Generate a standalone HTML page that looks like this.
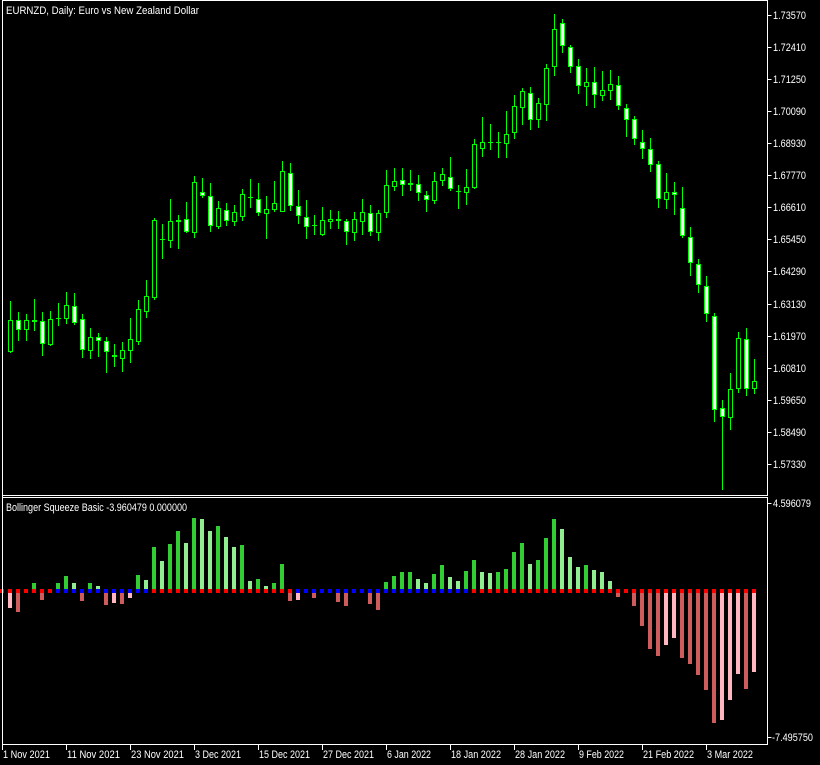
<!DOCTYPE html>
<html><head><meta charset="utf-8"><style>
html,body{margin:0;padding:0;background:#000;}
svg{display:block;}
text{font-family:"Liberation Sans",sans-serif;font-size:11px;fill:#fff;}
</style></head><body>
<svg width="820" height="765" viewBox="0 0 820 765" xmlns="http://www.w3.org/2000/svg">
<rect width="820" height="765" fill="#000"/>
<g fill="none" stroke="#fff" stroke-width="1">
<path d="M2.5 0.5H767.5V495.5H2.5Z"/>
<path d="M2.5 497.5H767.5V744.5H2.5Z"/>
<path d="M767.5 15.5h4M767.5 47.5h4M767.5 79.5h4M767.5 111.5h4M767.5 143.5h4M767.5 175.5h4M767.5 207.5h4M767.5 239.5h4M767.5 271.5h4M767.5 304.5h4M767.5 336.5h4M767.5 368.5h4M767.5 400.5h4M767.5 432.5h4M767.5 464.5h4M767.5 503.5h4M767.5 737.5h4"/>
<path d="M2.5 744V750M66.5 744V750M130.5 744V750M194.5 744V750M258.5 744V750M322.5 744V750M386.5 744V750M450.5 744V750M514.5 744V750M578.5 744V750M642.5 744V750M706.5 744V750"/>
</g>
<path fill="none" stroke="#00ff00" stroke-width="1" d="M10.5 301V353M18.5 312V341M26.5 314V341M34.5 299V331M42.5 312V356M50.5 311V346M58.5 303V326M66.5 292V324M74.5 293V325M82.5 314V358M90.5 328V359M98.5 333V357M106.5 337V373M114.5 344V367M122.5 342V372M130.5 318V363M138.5 300V345M146.5 280V318M154.5 218V300M162.5 224V259M170.5 199V248M178.5 215V249M186.5 202V233M194.5 176V238M202.5 178V198M210.5 183V232M218.5 201V229M226.5 203V226M234.5 205V226M242.5 189V221M250.5 179V208M258.5 183V216M266.5 196V239M274.5 181V212M282.5 161V212M290.5 163V211M298.5 190V224M306.5 200V239M314.5 215V235M322.5 207V236M330.5 210V229M338.5 211V229M346.5 219V245M354.5 212V241M362.5 199V235M370.5 205V236M378.5 210V241M386.5 170V218M394.5 168V191M402.5 168V196M410.5 170V191M418.5 175V201M426.5 191V212M434.5 172V204M442.5 168V186M450.5 157V191M458.5 185V209M466.5 169V205M474.5 139V189M482.5 117V157M490.5 124V150M498.5 132V158M506.5 111V158M514.5 95V139M522.5 88V125M530.5 87V130M538.5 98V128M546.5 64V121M554.5 14V76M562.5 19V53M570.5 45V73M578.5 59V94M586.5 68V106M594.5 67V108M602.5 71V101M610.5 70V100M618.5 76V110M626.5 104V137M634.5 116V145M642.5 130V159M650.5 138V172M658.5 161V208M666.5 173V209M674.5 182V215M682.5 187V238M690.5 227V276M698.5 259V293M706.5 276V322M714.5 313V422M722.5 400V490M730.5 373V430M738.5 332V393M746.5 328V396M754.5 359V394"/>
<path fill="none" stroke="#00ff00" stroke-width="1" d="M56 318.5h5M160 239.5h5M248 197.5h5M312 225.5h5M456 191.5h5M488 142.5h5M496 142.5h5"/>
<path fill="#000" stroke="#00ff00" stroke-width="1" d="M8.5 320.5h4v31h-4zM24.5 320.5h4v9h-4zM48.5 319.5h4v25h-4zM64.5 305.5h4v13h-4zM88.5 337.5h4v13h-4zM120.5 350.5h4v8h-4zM128.5 339.5h4v11h-4zM136.5 309.5h4v32h-4zM144.5 296.5h4v15h-4zM152.5 220.5h4v77h-4zM168.5 221.5h4v19h-4zM176.5 220.5h4v1h-4zM192.5 182.5h4v50h-4zM216.5 208.5h4v18h-4zM232.5 212.5h4v9h-4zM240.5 194.5h4v22h-4zM264.5 209.5h4v4h-4zM272.5 203.5h4v6h-4zM280.5 171.5h4v40h-4zM320.5 220.5h4v14h-4zM328.5 219.5h4v2h-4zM336.5 219.5h4v1h-4zM352.5 219.5h4v13h-4zM360.5 212.5h4v9h-4zM376.5 213.5h4v19h-4zM384.5 185.5h4v27h-4zM392.5 181.5h4v5h-4zM408.5 183.5h4v1h-4zM432.5 181.5h4v19h-4zM440.5 174.5h4v6h-4zM464.5 187.5h4v5h-4zM472.5 144.5h4v43h-4zM480.5 142.5h4v6h-4zM504.5 134.5h4v9h-4zM512.5 106.5h4v26h-4zM520.5 91.5h4v16h-4zM536.5 103.5h4v16h-4zM544.5 68.5h4v36h-4zM552.5 29.5h4v37h-4zM584.5 82.5h4v4h-4zM600.5 90.5h4v5h-4zM608.5 84.5h4v6h-4zM664.5 192.5h4v7h-4zM728.5 389.5h4v28h-4zM736.5 338.5h4v50h-4zM752.5 381.5h4v7h-4z"/>
<path fill="#fff" stroke="#00ff00" stroke-width="1" d="M16.5 320.5h4v9h-4zM32.5 320.5h4v1h-4zM40.5 321.5h4v22h-4zM72.5 306.5h4v16h-4zM80.5 319.5h4v30h-4zM96.5 337.5h4v3h-4zM104.5 341.5h4v10h-4zM112.5 355.5h4v1h-4zM184.5 219.5h4v12h-4zM200.5 192.5h4v3h-4zM208.5 196.5h4v29h-4zM224.5 210.5h4v10h-4zM256.5 199.5h4v13h-4zM288.5 173.5h4v32h-4zM296.5 206.5h4v9h-4zM304.5 217.5h4v9h-4zM344.5 221.5h4v10h-4zM368.5 213.5h4v18h-4zM400.5 180.5h4v4h-4zM416.5 184.5h4v8h-4zM424.5 195.5h4v4h-4zM448.5 177.5h4v11h-4zM528.5 93.5h4v26h-4zM560.5 23.5h4v22h-4zM568.5 47.5h4v19h-4zM576.5 66.5h4v19h-4zM592.5 82.5h4v12h-4zM616.5 85.5h4v20h-4zM624.5 108.5h4v11h-4zM632.5 119.5h4v19h-4zM640.5 142.5h4v6h-4zM648.5 149.5h4v15h-4zM656.5 164.5h4v34h-4zM672.5 192.5h4v2h-4zM680.5 208.5h4v27h-4zM688.5 237.5h4v25h-4zM696.5 264.5h4v20h-4zM704.5 286.5h4v27h-4zM712.5 316.5h4v93h-4zM720.5 408.5h4v8h-4zM744.5 339.5h4v49h-4z"/>
<path fill="none" stroke="#32cd32" stroke-width="4" d="M34 589V583M58 589V583M66 589V576M90 589V583M138 589V575M154 589V547M170 589V544M178 589V531M194 589V518M218 589V526M242 589V545M258 589V579M274 589V583M282 589V564M386 589V582M394 589V576M402 589V572M410 589V572M434 589V574M442 589V565M466 589V571M474 589V560M498 589V572M506 589V569M514 589V552M522 589V543M538 589V560M546 589V538M554 589V519M586 589V565"/>
<path fill="none" stroke="#90ee90" stroke-width="4" d="M74 589V583M98 589V586M146 589V580M162 589V561M186 589V543M202 589V519M210 589V531M226 589V537M234 589V547M250 589V581M266 589V586M418 589V579M426 589V583M450 589V577M458 589V581M482 589V572M490 589V573M530 589V564M562 589V529M570 589V557M578 589V567M594 589V570M602 589V572M610 589V581"/>
<path fill="none" stroke="#cd5c5c" stroke-width="4" d="M18 593V612M42 593V600M82 593V601M106 593V605M122 593V604M290 593V601M314 593V598M338 593V602M346 593V606M370 593V604M378 593V610M618 593V597M634 593V606M642 593V626M650 593V649M658 593V656M682 593V658M690 593V664M698 593V675M706 593V690M714 593V723M746 593V689"/>
<path fill="none" stroke="#ffb6c1" stroke-width="4" d="M10 593V608M114 593V603M130 593V598M298 593V600M666 593V645M674 593V638M722 593V720M730 593V700M738 593V674M754 593V672"/>
<path fill="none" stroke="#ff0000" stroke-width="4" stroke-dasharray="4 4" d="M0 591H56M152 591H296M472 591H760"/>
<path fill="none" stroke="#0000ff" stroke-width="4" stroke-dasharray="4 4" d="M56 591H152M296 591H472"/>
<path stroke="#fff" stroke-width="1" d="M2.5 0V745"/>
<text x="6" y="14" textLength="193" lengthAdjust="spacingAndGlyphs">EURNZD, Daily:  Euro vs New Zealand Dollar</text>
<text x="6" y="511" textLength="181" lengthAdjust="spacingAndGlyphs">Bollinger Squeeze Basic -3.960479 0.000000</text>
<g>
<text x="773" y="19" textLength="33" lengthAdjust="spacingAndGlyphs">1.73570</text>
<text x="773" y="51" textLength="33" lengthAdjust="spacingAndGlyphs">1.72410</text>
<text x="773" y="83" textLength="33" lengthAdjust="spacingAndGlyphs">1.71250</text>
<text x="773" y="115" textLength="33" lengthAdjust="spacingAndGlyphs">1.70090</text>
<text x="773" y="147" textLength="33" lengthAdjust="spacingAndGlyphs">1.68930</text>
<text x="773" y="179" textLength="33" lengthAdjust="spacingAndGlyphs">1.67770</text>
<text x="773" y="211" textLength="33" lengthAdjust="spacingAndGlyphs">1.66610</text>
<text x="773" y="243" textLength="33" lengthAdjust="spacingAndGlyphs">1.65450</text>
<text x="773" y="275" textLength="33" lengthAdjust="spacingAndGlyphs">1.64290</text>
<text x="773" y="308" textLength="33" lengthAdjust="spacingAndGlyphs">1.63130</text>
<text x="773" y="340" textLength="33" lengthAdjust="spacingAndGlyphs">1.61970</text>
<text x="773" y="372" textLength="33" lengthAdjust="spacingAndGlyphs">1.60810</text>
<text x="773" y="404" textLength="33" lengthAdjust="spacingAndGlyphs">1.59650</text>
<text x="773" y="436" textLength="33" lengthAdjust="spacingAndGlyphs">1.58490</text>
<text x="773" y="468" textLength="33" lengthAdjust="spacingAndGlyphs">1.57330</text>
<text x="773" y="507" textLength="38" lengthAdjust="spacingAndGlyphs">4.596079</text>
<text x="772" y="741" textLength="41" lengthAdjust="spacingAndGlyphs">-7.495750</text>
</g>
<g>
<text x="3" y="758" textLength="47" lengthAdjust="spacingAndGlyphs">1 Nov 2021</text>
<text x="67" y="758" textLength="53" lengthAdjust="spacingAndGlyphs">11 Nov 2021</text>
<text x="131" y="758" textLength="53" lengthAdjust="spacingAndGlyphs">23 Nov 2021</text>
<text x="195" y="758" textLength="46" lengthAdjust="spacingAndGlyphs">3 Dec 2021</text>
<text x="259" y="758" textLength="51" lengthAdjust="spacingAndGlyphs">15 Dec 2021</text>
<text x="323" y="758" textLength="51" lengthAdjust="spacingAndGlyphs">27 Dec 2021</text>
<text x="387" y="758" textLength="44" lengthAdjust="spacingAndGlyphs">6 Jan 2022</text>
<text x="451" y="758" textLength="50" lengthAdjust="spacingAndGlyphs">18 Jan 2022</text>
<text x="515" y="758" textLength="50" lengthAdjust="spacingAndGlyphs">28 Jan 2022</text>
<text x="579" y="758" textLength="45" lengthAdjust="spacingAndGlyphs">9 Feb 2022</text>
<text x="643" y="758" textLength="51" lengthAdjust="spacingAndGlyphs">21 Feb 2022</text>
<text x="707" y="758" textLength="46" lengthAdjust="spacingAndGlyphs">3 Mar 2022</text>
</g>
</svg>
</body></html>
